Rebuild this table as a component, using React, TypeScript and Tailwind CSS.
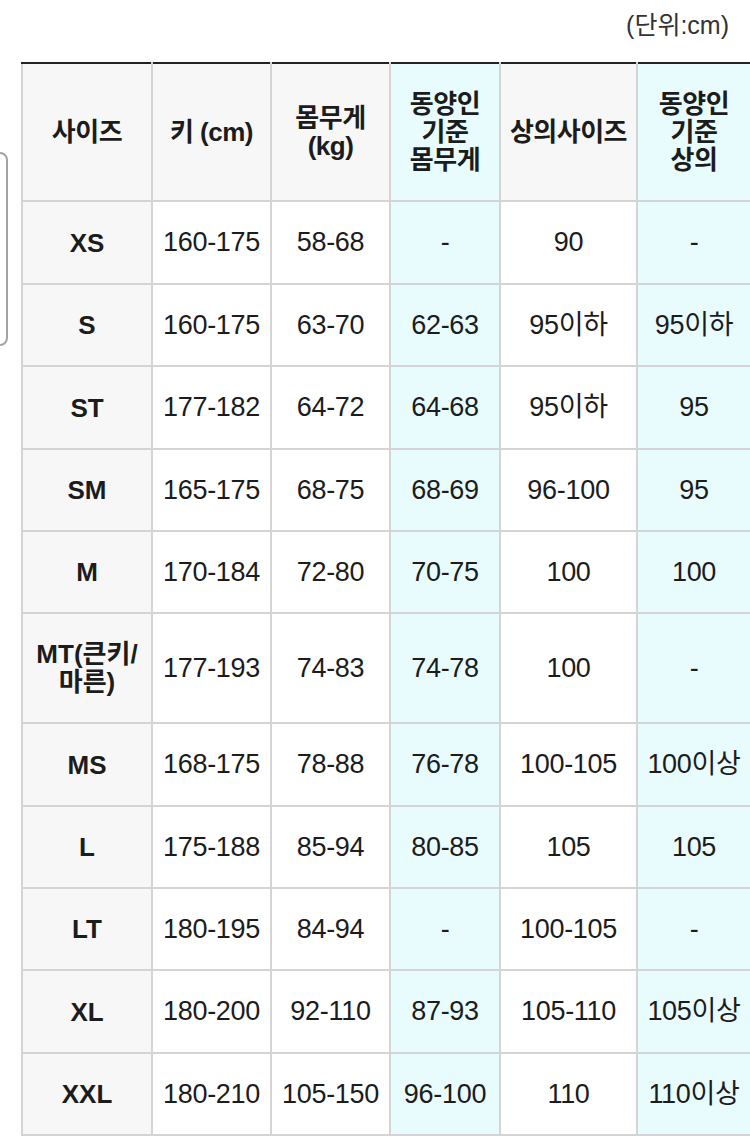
import React from 'react';

const font = { fontFamily: '"Liberation Sans", "Noto Sans CJK KR", sans-serif' };

type Row = { size: string[]; h: string; cells: string[] };

const rows: Row[] = [
  { size: ['XS'], h: 'h-[83px]', cells: ['160-175', '58-68', '-', '90', '-'] },
  { size: ['S'], h: 'h-[82px]', cells: ['160-175', '63-70', '62-63', '95이하', '95이하'] },
  { size: ['ST'], h: 'h-[83px]', cells: ['177-182', '64-72', '64-68', '95이하', '95'] },
  { size: ['SM'], h: 'h-[82px]', cells: ['165-175', '68-75', '68-69', '96-100', '95'] },
  { size: ['M'], h: 'h-[82px]', cells: ['170-184', '72-80', '70-75', '100', '100'] },
  { size: ['MT(큰키/', '마른)'], h: 'h-[110px]', cells: ['177-193', '74-83', '74-78', '100', '-'] },
  { size: ['MS'], h: 'h-[83px]', cells: ['168-175', '78-88', '76-78', '100-105', '100이상'] },
  { size: ['L'], h: 'h-[82px]', cells: ['175-188', '85-94', '80-85', '105', '105'] },
  { size: ['LT'], h: 'h-[82px]', cells: ['180-195', '84-94', '-', '100-105', '-'] },
  { size: ['XL'], h: 'h-[83px]', cells: ['180-200', '92-110', '87-93', '105-110', '105이상'] },
  { size: ['XXL'], h: 'h-[82px]', cells: ['180-210', '105-150', '96-100', '110', '110이상'] },
];

const headers: { lines: string[]; cyan: boolean }[] = [
  { lines: ['사이즈'], cyan: false },
  { lines: ['키 (cm)'], cyan: false },
  { lines: ['몸무게', '(kg)'], cyan: false },
  { lines: ['동양인', '기준', '몸무게'], cyan: true },
  { lines: ['상의사이즈'], cyan: false },
  { lines: ['동양인', '기준', '상의'], cyan: true },
];

// column index (0 = size column) that has the cyan tint
const cyanCols = [3, 5];

export default function App() {
  return (
    <div className="relative w-[750px] h-[1137px] overflow-hidden bg-white text-[#1c1c1c]" style={font}>
      {/* side drawer edge */}
      <div className="absolute left-[-16px] top-[152px] w-[24px] h-[194px] rounded-[8px] border-2 border-[#a3a3a3] bg-white" />

      <div className="h-[62px] flex items-center justify-end pr-[21px] pb-[10px] text-[25px] text-[#333]">
        (단위:cm)
      </div>

      <table className="ml-[21px] w-[729px] table-fixed border-collapse">
        <colgroup>
          <col className="w-[130px]" />
          <col className="w-[119px]" />
          <col className="w-[119px]" />
          <col className="w-[110px]" />
          <col className="w-[137px]" />
          <col className="w-[114px]" />
        </colgroup>
        <thead>
          <tr className="h-[138px]">
            {headers.map((hd, i) => (
              <th
                key={i}
                className={`border-2 border-[#d4d4d4] border-t-[#222] text-center align-middle font-bold text-[26px] leading-[28px] tracking-[-0.5px] ${
                  hd.cyan ? 'bg-[#e8fbfd]' : 'bg-[#f7f7f7]'
                }`}
              >
                {hd.lines.map((l, j) => (
                  <div key={j}>{l}</div>
                ))}
              </th>
            ))}
          </tr>
        </thead>
        <tbody>
          {rows.map((r, i) => (
            <tr key={i} className={r.h}>
              <td className="border-2 border-[#d4d4d4] bg-[#f7f7f7] text-center align-middle font-bold text-[26px] leading-[28px]">
                {r.size.map((l, j) => (
                  <div key={j}>{l}</div>
                ))}
              </td>
              {r.cells.map((c, j) => (
                <td
                  key={j}
                  className={`border-2 border-[#d4d4d4] text-center align-middle text-[27px] tracking-[-0.3px] ${
                    cyanCols.includes(j + 1) ? 'bg-[#e8fbfd]' : 'bg-white'
                  }`}
                >
                  {c}
                </td>
              ))}
            </tr>
          ))}
        </tbody>
      </table>
    </div>
  );
}
